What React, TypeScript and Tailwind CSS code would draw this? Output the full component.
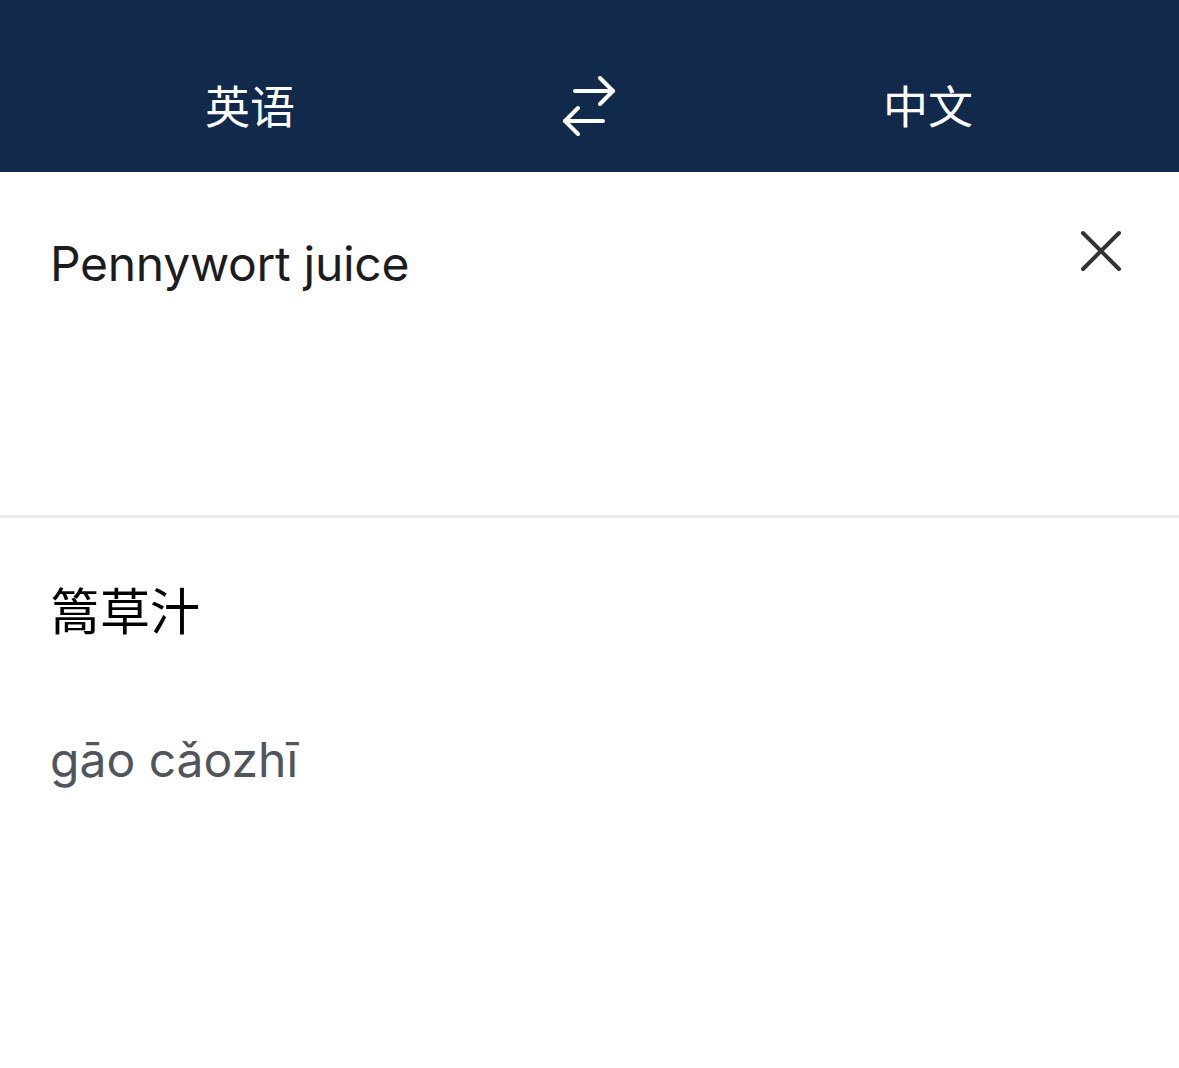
import React from "react";

const font = { fontFamily: 'Inter, "Noto Sans CJK SC", sans-serif' };

function SwapIcon() {
  return (
    <svg width="56" height="62" viewBox="0 0 56 62" fill="none" stroke="white" strokeWidth="4" strokeLinecap="round" strokeLinejoin="round">
      <path d="M14 15 H52" />
      <path d="M39 2 L52 15 L39 28" />
      <path d="M42 45 H4" />
      <path d="M17 32 L4 45 L17 58" />
    </svg>
  );
}

function CloseIcon() {
  return (
    <svg width="44" height="44" viewBox="0 0 44 44" fill="none" stroke="#333333" strokeWidth="4" strokeLinecap="round">
      <path d="M4 4 L40 40" />
      <path d="M40 4 L4 40" />
    </svg>
  );
}

export default function App() {
  return (
    <div className="w-[1179px] h-[1068px] bg-white flex flex-col" style={font}>
      <header className="h-[172px] bg-[#11294a] flex items-center justify-between pl-[205px] pr-[206px] pt-[42px]">
        <span className="text-white text-[45px] leading-none">英语</span>
        <SwapIcon />
        <span className="text-white text-[45px] leading-none">中文</span>
      </header>

      <section className="h-[343px] flex items-start justify-between pl-[50px] pr-[56px] pt-[57px]">
        <p className="text-[#1c1c1e] text-[48px] leading-none tracking-[-0.3px] mt-[11px]">Pennywort juice</p>
        <CloseIcon />
      </section>

      <div className="h-[3px] bg-[#ececee]" />

      <section className="flex-1 flex flex-col pl-[50px] pt-[69px]">
        <p className="text-black text-[50px] leading-none">篙草汁</p>
        <p className="text-[#50555c] text-[48px] leading-none mt-[99px]">gāo cǎozhī</p>
      </section>
    </div>
  );
}
